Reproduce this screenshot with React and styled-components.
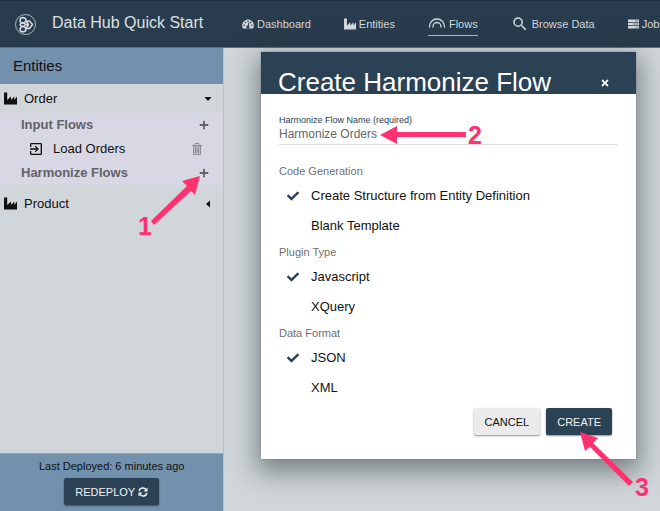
import React, { useState } from 'react';
import styled, { createGlobalStyle, css } from 'styled-components';
import { FaCheck, FaPlus, FaTimes } from 'react-icons/fa';
import { MdExitToApp, MdSearch } from 'react-icons/md';

const Global = createGlobalStyle`
  * { box-sizing: border-box; }
  body { margin: 0; overflow: hidden; background: #d0d6da; color: #111; font: 13px/18px "Liberation Sans", Arial, sans-serif; }
  button, input { font: inherit; color: inherit; }
  svg { flex: none; }
`;

const Page = styled.div`
  position: relative;
  display: flex;
  flex-direction: column;
  height: 100vh;
  overflow: hidden;
`;
const TopBar = styled.header`
  display: flex;
  flex: none;
  align-items: center;
  height: 48px;
  padding-left: 15px;
  color: #dbe0e4;
  background: #283c4d;
  border-top: 1px solid #1c3040;
  border-bottom: 1px solid #63707c;
`;
const Brand = styled.h1`
  flex: none;
  width: 174px;
  margin: 0 16px 2px 16px;
  font-size: 16px;
  font-weight: 400;
  line-height: 20px;
  white-space: nowrap;
`;
const Nav = styled.nav`
  display: flex;
  flex: none;
  align-items: center;
  gap: 33px;
  font-size: 11px;
`;
const NavLink = styled.a`
  display: flex;
  align-items: center;
  gap: 3px;
  height: 24px;
  color: #d2d7dc;
  text-decoration: none;
  white-space: nowrap;
  border-bottom: 1px solid ${p => (p.$active ? '#aeb9c3' : 'transparent')};
`;
const Body = styled.div`
  display: flex;
  flex: 1;
  min-height: 0;
`;
const Sidebar = styled.aside`
  display: flex;
  flex-direction: column;
  width: 34%;
  border-right: 1px solid #bcc1c7;
`;
const SideTitle = styled.h2`
  margin: 0;
  padding: 8px 13px;
  font-size: 15px;
  font-weight: 400;
  line-height: 20px;
  background: #7191ad;
`;
const EntityRow = styled.button`
  display: flex;
  align-items: center;
  gap: 7px;
  width: 100%;
  height: 29px;
  padding: 0 11px 0 4px;
  text-align: left;
  background: none;
  border: 0;
`;
const Grow = styled.span`
  flex: 1;
`;
const FlowGroup = styled.section`
  margin-bottom: 4px;
  background: #d8d8e5;
`;
const FlowRow = styled.div`
  display: flex;
  align-items: center;
  height: 24px;
  padding: 0 14px 0 21px;
  ${p => p.$heading && css`
    color: #626267;
    font-weight: 700;
  `}
  ${p => p.$item && css`
    gap: 9px;
    padding: 0 21px 0 28px;
  `}
`;
const IconButton = styled.button`
  display: flex;
  padding: 0;
  color: ${p => p.$color || 'inherit'};
  background: none;
  border: 0;
`;
const DeployPanel = styled.footer`
  display: flex;
  flex-direction: column;
  align-items: center;
  gap: 3px;
  margin-top: auto;
  padding: 3px 0 6px;
  font-size: 11px;
  background: #7191ad;
  border-top: 1px solid #98a4af;
`;
const Button = styled.button`
  display: flex;
  align-items: center;
  justify-content: center;
  gap: 3px;
  height: 27px;
  padding: 0 11px;
  color: ${p => (p.$plain ? '#111' : '#f1f4f6')};
  font-size: 11px;
  background: ${p => (p.$plain ? '#ebebeb' : '#2b4154')};
  border: 0;
  border-radius: 2px;
  box-shadow: 0 1px 2px rgba(0, 0, 0, 0.45);
`;
const Overlay = styled.div`
  position: absolute;
  inset: 52px 0 auto;
  display: flex;
  padding-left: 261px;
`;
const Dialog = styled.form`
  width: 375px;
  background: #fff;
  box-shadow: 0 9px 24px 4px rgba(35, 45, 50, 0.5), 0 0 1px #67717b;
`;
const DialogHead = styled.header`
  display: flex;
  align-items: flex-end;
  justify-content: space-between;
  height: 42px;
  padding: 0 26px 0 17px;
  color: #fff;
  background: #2b4154;
`;
const DialogTitle = styled.h2`
  margin: 0;
  font-size: 26px;
  font-weight: 400;
  line-height: 24px;
`;
const CloseButton = styled(IconButton)`
  padding-bottom: 6px;
`;
const DialogBody = styled.div`
  padding: 19px 18px 24px;
`;
const Field = styled.label`
  display: block;
  margin-bottom: 16px;
  color: #2b4154;
  font-size: 9px;
  line-height: 14px;
`;
const TextBox = styled.input`
  display: block;
  width: 100%;
  height: 18px;
  padding: 0 0 4px;
  color: #666;
  font-size: 12px;
  line-height: 14px;
  background: transparent;
  border: 0;
  border-bottom: 1px solid #ddd;
  outline: 0;
`;
const Group = styled.fieldset`
  margin: 0;
  padding: 0 0 2px;
  border: 0;
`;
const Legend = styled.legend`
  padding: 0;
  color: #707070;
  font-size: 11px;
  line-height: 20px;
`;
const Option = styled.label`
  display: flex;
  align-items: center;
  height: 29px;
  font-size: 13px;
  &:first-of-type { height: 30px; }
`;
const Radio = styled.input`
  appearance: none;
  width: 0;
  height: 0;
  margin: 0;
`;
const Tick = styled.span`
  display: flex;
  width: 32px;
  padding-left: 8px;
  color: #2b4154;
`;
const Actions = styled.div`
  display: flex;
  justify-content: flex-end;
  gap: 6px;
  padding: 4px 6px 0 0;
`;
const Annotations = styled.svg`
  position: absolute;
  top: 0;
  left: 0;
  width: 660px;
  height: 511px;
  pointer-events: none;
  fill: #ff316f;
  stroke: none;
  font: 700 25px "Liberation Sans", Arial, sans-serif;
`;

const Logo = () => (
  <svg width="21" height="21" viewBox="0 0 42 42" fill="none" stroke="#d8dde1">
    <circle cx="21" cy="21" r="20" strokeWidth="1.5" />
    <g strokeWidth="3" strokeLinejoin="round">
      <path d="m11 9 5-2 5 2 1 5-4 4h-5l-3-4z" />
      <path d="m13 18h5l3 3-3 4h-5l-3-4z" />
      <path d="m13 25h5l4 4-1 5-5 2-5-2-1-5z" />
      <path d="m22 14 7 0 6 7-6 8h-7M22 14l5 7-5 8M21 21h6" />
    </g>
  </svg>
);
const Industry = ({ size = 13 }) => (
  <svg width={size} height={size} viewBox="0 0 13 13" fill="currentColor">
    <path d="M0 .5h3.2V8L7 4.5V8l3.3-3.5V8L13 4.5v8H0z" />
  </svg>
);
const Gauge = () => (
  <svg width="12" height="10" viewBox="0 0 24 20">
    <path fill="currentColor" d="M12 1A12 12 0 0 0 2 19h20A12 12 0 0 0 12 1z" />
    <g fill="#283c4d">
      <circle cx="4.5" cy="12.5" r="1.6" />
      <circle cx="7" cy="7" r="1.6" />
      <circle cx="12" cy="4.5" r="1.6" />
      <circle cx="17" cy="7" r="1.6" />
      <circle cx="19.5" cy="12.5" r="1.6" />
      <path d="m13 7 2 .5-1.5 6a3 3 0 1 1-2-.5z" />
    </g>
  </svg>
);
const FlowArc = () => (
  <svg width="18" height="14" viewBox="0 0 18 14" fill="none" stroke="currentColor" strokeWidth="1.3">
    <path d="M1.5 10.5v-1a7.5 7.5 0 0 1 15 0v1M5 10.5v-1a4 4 0 0 1 8 0v1" />
  </svg>
);
const Jobs = () => (
  <svg width="11" height="10" viewBox="0 0 11 10">
    <path fill="currentColor" d="M0 .5h11v2.4H0zM0 3.8h11v2.4H0zM0 7.1h11v2.4H0z" />
    <path fill="#7d8994" d="M7 1.2h3v1H7zM5 4.5h5v1H5zM7.5 7.8H10v1H7.500z" />
  </svg>
);
const Trash = () => (
  <svg width="10" height="12" viewBox="0 0 10 12" fill="none" stroke="currentColor">
    <path fill="#c2c2ca" d="M1.500 3v8.500h7V3z" />
    <path d="M0 2.500h10M3 2V.5h4V2M3.500 4.500V10M5 4.500V10M6.500 4.500V10" />
  </svg>
);
const Refresh = () => (
  <svg width="10" height="10" viewBox="0 0 20 20" fill="none" stroke="currentColor" strokeWidth="3">
    <path d="M2 8a8 8 0 0 1 14-3M18 12a8 8 0 0 1-14 3" />
    <path fill="currentColor" stroke="none" d="M19 1v8h-8zM1 19v-8h8z" />
  </svg>
);
const Caret = ({ open }) => (
  <svg width="8" height="8" viewBox="0 0 8 8" fill="currentColor">
    <path d={open ? 'M.5 2h7L4 6z' : 'M6 .5v7L2 4z'} />
  </svg>
);

const groups = [
  ['Code Generation', ['Create Structure from Entity Definition', 'Blank Template']],
  ['Plugin Type', ['Javascript', 'XQuery']],
  ['Data Format', ['JSON', 'XML']],
];

function OptionGroup({ title, options }) {
  const [value, setValue] = useState(options[0]);
  return (
    <Group>
      <Legend>{title}</Legend>
      {options.map(option => (
        <Option key={option}>
          <Radio type="radio" name={title} checked={value === option} onChange={() => setValue(option)} />
          <Tick>{value === option && <FaCheck size={12} />}</Tick>
          {option}
        </Option>
      ))}
    </Group>
  );
}

export default function App() {
  return (
    <Page>
      <Global />
      <TopBar>
        <Logo />
        <Brand>Data Hub Quick Start</Brand>
        <Nav>
          <NavLink href="#dashboard"><Gauge />Dashboard</NavLink>
          <NavLink href="#entities"><Industry size={12} />Entities</NavLink>
          <NavLink href="#flows" $active><FlowArc />Flows</NavLink>
          <NavLink href="#browse"><MdSearch size={18} />Browse Data</NavLink>
          <NavLink href="#jobs"><Jobs />Jobs</NavLink>
        </Nav>
      </TopBar>
      <Body>
        <Sidebar>
          <SideTitle>Entities</SideTitle>
          <EntityRow type="button"><Industry /><Grow>Order</Grow><Caret open /></EntityRow>
          <FlowGroup>
            <FlowRow $heading><Grow>Input Flows</Grow><IconButton type="button" aria-label="Add input flow"><FaPlus size={10} /></IconButton></FlowRow>
            <FlowRow $item><MdExitToApp size={16} /><Grow>Load Orders</Grow><IconButton type="button" $color="#8d8d92" aria-label="Delete Load Orders"><Trash /></IconButton></FlowRow>
            <FlowRow $heading><Grow>Harmonize Flows</Grow><IconButton type="button" aria-label="Add harmonize flow"><FaPlus size={10} /></IconButton></FlowRow>
          </FlowGroup>
          <EntityRow type="button"><Industry /><Grow>Product</Grow><Caret /></EntityRow>
          <DeployPanel>
            <span>Last Deployed: 6 minutes ago</span>
            <Button type="button">REDEPLOY<Refresh /></Button>
          </DeployPanel>
        </Sidebar>
      </Body>
      <Overlay>
        <Dialog onSubmit={event => event.preventDefault()}>
          <DialogHead>
            <DialogTitle>Create Harmonize Flow</DialogTitle>
            <CloseButton type="button" aria-label="Close"><FaTimes size={10} /></CloseButton>
          </DialogHead>
          <DialogBody>
            <Field>Harmonize Flow Name (required)<TextBox defaultValue="Harmonize Orders" /></Field>
            {groups.map(([title, options]) => <OptionGroup key={title} title={title} options={options} />)}
            <Actions>
              <Button type="button" $plain>CANCEL</Button>
              <Button type="submit">CREATE</Button>
            </Actions>
          </DialogBody>
        </Dialog>
      </Overlay>
      <Annotations viewBox="0 0 660 511">
        <path d="m200 176-5 19-4-4-37 34-3-4 36-35-5-5zM380 135l17-9v6h69v5h-69v7zM580 432l18 6-5 5 40 39-4 4-39-39-5 4z" />
        <text x="138" y="235">1</text>
        <text x="468" y="144">2</text>
        <text x="635" y="496">3</text>
      </Annotations>
    </Page>
  );
}
